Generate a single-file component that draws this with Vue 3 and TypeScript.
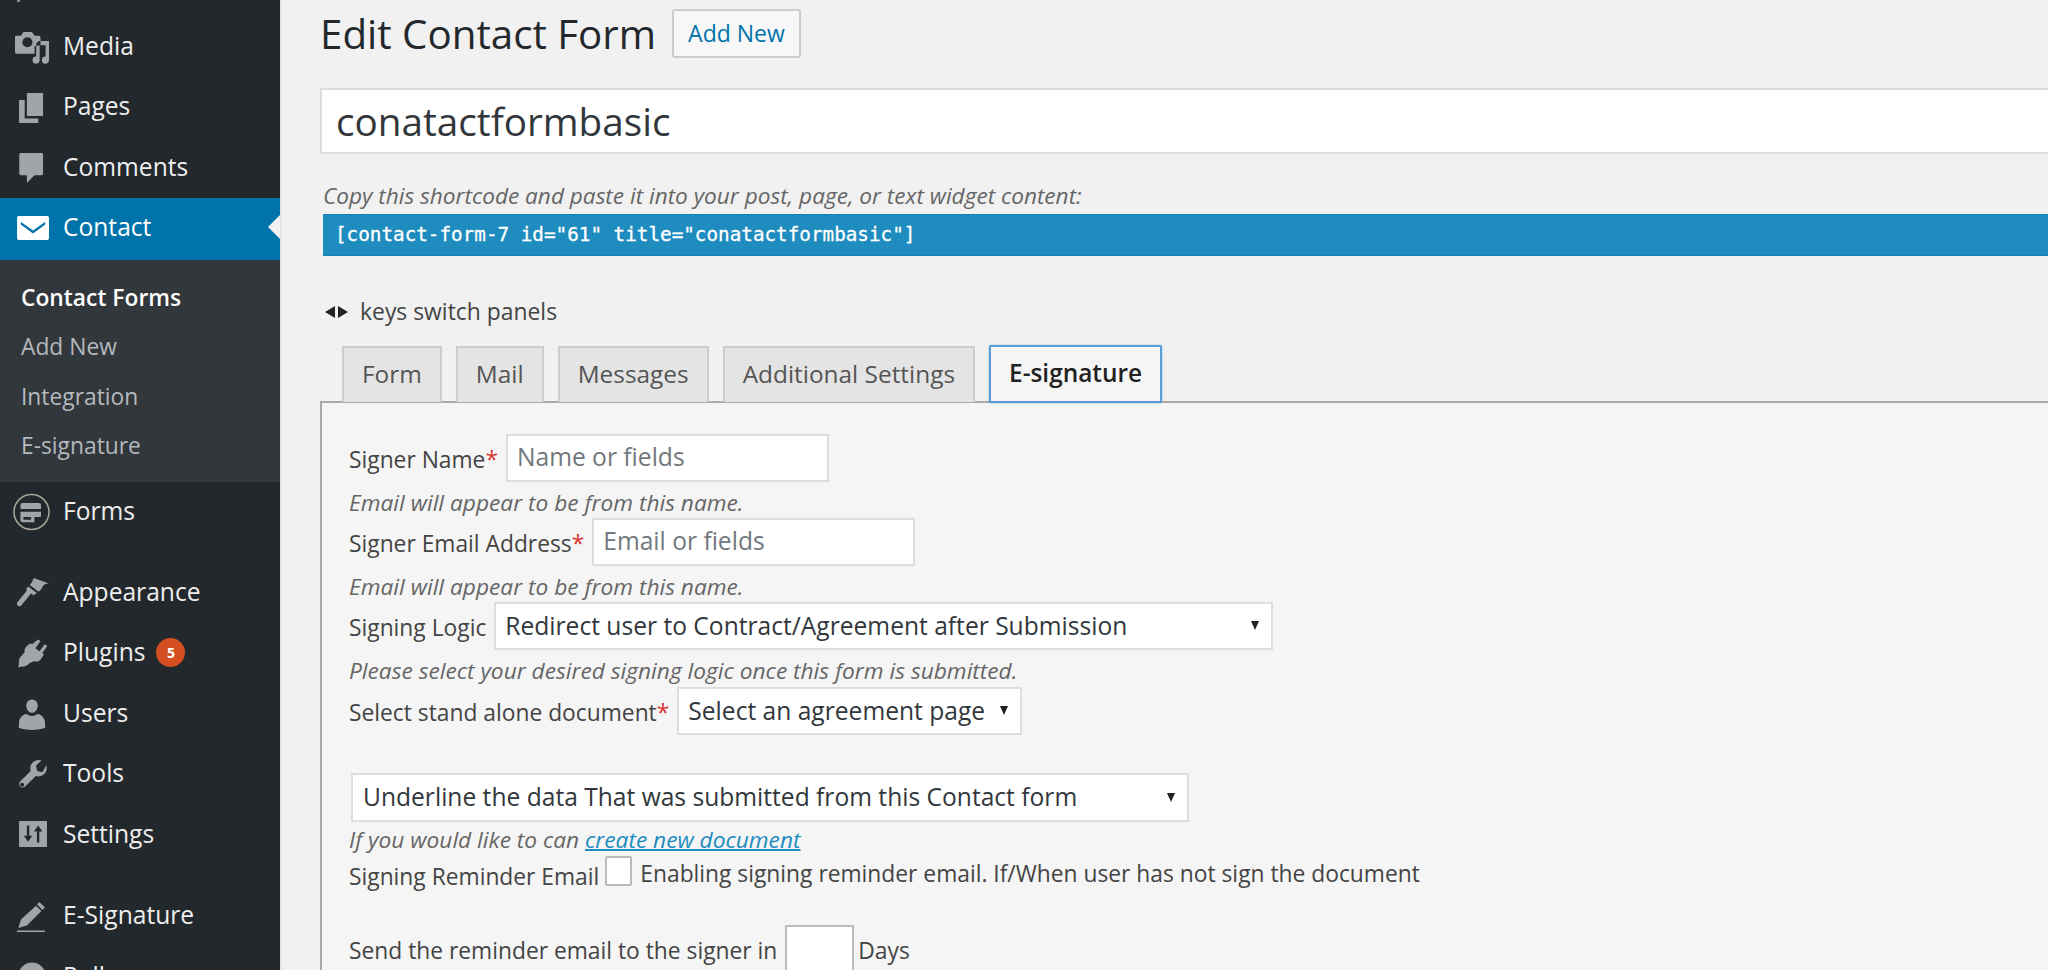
<template>
  <div class="page">
    <aside class="sidebar">
      <span class="cut-icon"></span>
      <ul class="menu">
        <li v-for="item in topItems" :key="item.label" class="menu-item">
          <svg class="menu-icon" viewBox="0 0 20 20"><path :d="item.icon" /></svg>
          <span>{{ item.label }}</span>
        </li>
      </ul>
      <div class="menu-item current">
        <svg class="menu-icon" viewBox="0 0 20 20"><path :d="icons.mail" /></svg>
        <span>Contact</span>
      </div>
      <ul class="submenu">
        <li class="sub-current">Contact Forms</li>
        <li>Add New</li>
        <li>Integration</li>
        <li>E-signature</li>
      </ul>
      <ul class="menu">
        <li class="menu-item forms-item">
          <svg class="menu-icon" viewBox="0 0 20 20">
            <circle cx="9.700" cy="10" r="10.300" fill="none" stroke="#a8a39a" stroke-width="0.9" />
            <path :d="icons.forms" />
          </svg>
          <span>Forms</span>
        </li>
      </ul>
      <ul class="menu">
        <li v-for="item in lowerItems" :key="item.label" class="menu-item">
          <svg class="menu-icon" viewBox="0 0 20 20"><path :d="item.icon" /></svg>
          <span>{{ item.label }}</span>
          <b v-if="item.badge" class="badge">{{ item.badge }}</b>
        </li>
      </ul>
      <ul class="menu menu-sign">
        <li class="menu-item">
          <svg class="menu-icon" viewBox="0 0 20 20"><path :d="icons.pen" /></svg>
          <span>E-Signature</span>
        </li>
        <li class="menu-item">
          <svg class="menu-icon" viewBox="0 0 20 20"><circle cx="10" cy="10" r="8" /></svg>
          <span>Polls</span>
        </li>
      </ul>
    </aside>

    <main class="content">
      <div class="heading">
        <h1>Edit Contact Form</h1>
        <a class="add-new">Add New</a>
      </div>
      <div class="title-input">conatactformbasic</div>
      <p class="caption">Copy this shortcode and paste it into your post, page, or text widget content:</p>
      <div class="shortcode">[contact-form-7 id="61" title="conatactformbasic"]</div>
      <p class="keys">
        <svg class="arrows" viewBox="0 0 23 12"><path d="M10 0v12L0 6zM13 0l10 6-10 6z" /></svg>
        keys switch panels
      </p>

      <div class="tabs">
        <span v-for="tab in tabs" :key="tab" class="tab">{{ tab }}</span>
        <span class="tab active">E-signature</span>
      </div>

      <section class="panel">
        <div class="group">
          <div class="row">
            <label>Signer Name<i>*</i></label>
            <div class="field f-name placeholder">Name or fields</div>
          </div>
          <p class="hint">Email will appear to be from this name.</p>
        </div>
        <div class="group">
          <div class="row">
            <label>Signer Email Address<i>*</i></label>
            <div class="field f-name placeholder">Email or fields</div>
          </div>
          <p class="hint">Email will appear to be from this name.</p>
        </div>
        <div class="group group-logic">
          <div class="row">
            <label>Signing Logic</label>
            <div class="field select f-logic">Redirect user to Contract/Agreement after Submission</div>
          </div>
          <p class="hint">Please select your desired signing logic once this form is submitted.</p>
        </div>
        <div class="row">
          <label>Select stand alone document<i>*</i></label>
          <div class="field select f-doc">Select an agreement page</div>
        </div>
        <div class="field select f-under">Underline the data That was submitted from this Contact form</div>
        <p class="hint hint-link">If you would like to can <a>create new document</a></p>
        <div class="row row-check">
          <label>Signing Reminder Email</label>
          <span class="check"></span>
          <span class="check-text">Enabling signing reminder email. If/When user has not sign the document</span>
        </div>
        <div class="row row-days">
          <label>Send the reminder email to the signer in</label>
          <span class="days"></span>
          <label>Days</label>
        </div>
      </section>
    </main>
  </div>
</template>

<script setup lang="ts">
const icons = {
  media:
    'M.5 4h3L5 1.800h5L11.500 4H14a1 1 0 0 1 1 1v4.500l-3.500.5v4.500H1a1 1 0 0 1-1-1V5a1 1 0 0 1 .5-1zM7.300 4.800a3 3 0 1 0 0 6 3 3 0 0 0 0-6zM20 7v11.300a2.100 2.100 0 1 1-2-2.100V9.500h-3.500v8.800a2.100 2.100 0 1 1-2-2.100V8.500l1.500-1.500z',
  pages: 'M7 1.800h9.500v13.500H7zM5.700 5.900v10.800h8v2.700H2.400V5.900z',
  comments:
    'M3.500 1.800h12c.6 0 1 .4 1 1v11c0 .6-.4 1-1 1h-4L7 19.400v-4.600H3.500c-.6 0-1-.4-1-1v-11c0-.6.4-1 1-1z',
  mail: 'M2.200 2.400H19a1 1 0 0 1 1 1v12.100a1 1 0 0 1-1 1H2.200a1 1 0 0 1-1-1V3.400a1 1 0 0 1 1-1zM3.400 5.700l7.200 5.200 7.200-5.200v1.600l-7.200 5.300-7.200-5.300z',
  forms:
    'M4.500 4.700H14c.8 0 1.300.5 1.300 1.300v2.200H3.200V6c0-.8.5-1.300 1.300-1.300zM3.200 9.900h12.100v2.400c0 .4-.3.7-.7.7h-3.200v3H4.500c-.8 0-1.300-.5-1.300-1.300zM5 13h4.500v1.500H5z',
  brush:
    'M11 1.800l9 3.200c-2.200 0-3.400.8-4 2.200-.5 1.200-1.300 2.200-2.300 2.500L8.700 5.900C9.700 4.900 10.500 3.500 11 1.800zM7.800 6.800l5 3.800-1.800 1.300-1.600-1-5.600 6.900c-.6.700-1.600.7-2.200.2s-.6-1.400-.1-2.100l5.400-6.600-.3-1.200z',
  plug:
    'M13.500 2l1.500 1-3 4.200 2.500 1.800 2.900-4.200 1.600 1.100-3 4.300 1 .7-1.700 2.600c-1 1.400-2.600 1.800-4.200 1.300L8.500 16c-1.300 1.600-3.300 2.200-4.500 2l-2 .5.300-2.500c-.2-1.500.3-3 1.400-4.200l1.900-2.100c-.2-1.500.3-2.800 1.400-3.800L9 4.200l1 .7z',
  users:
    'M10 2a3.400 3.400 0 0 1 3.400 3.600c0 2.200-1.500 4.300-3.400 4.300S6.600 7.800 6.600 5.600A3.400 3.400 0 0 1 10 2zM6.700 10.500c.9.800 2 1.300 3.300 1.300s2.400-.5 3.300-1.300c2.600.7 4 2.500 4.300 4.700l.2 3.500c-2 .8-5 1.300-7.800 1.300s-5.800-.5-7.800-1.300l.2-3.500c.3-2.200 1.700-4 4.300-4.700z',
  tools:
    'M18.400 4.800c.6 1.800.2 3.800-1.200 5.200-1.400 1.400-3.300 1.700-5 1.200l-6.200 6.200c-.8.800-2.200.8-3 0s-.8-2.200 0-3l6.200-6.200c-.5-1.700-.2-3.600 1.200-5 1.400-1.400 3.400-1.800 5.100-1.200l-3.200 3.200.8 3 3 .8zM4.200 15.100a1.200 1.200 0 1 0 0 2.400 1.200 1.200 0 0 0 0-2.400z',
  settings:
    'M2.400 2.400h16.400v15.200H2.400zM7 5h1.400v6h1.800l-2.500 3.500L5.200 11H7zM13.600 5l2.500 3.500h-1.800V15h-1.400V8.500h-1.800z',
  pen: 'M14.300 1.800l3.300 3.100-1.400 1.500-3.200-3.200zM12.300 3.900l3.200 3.200-8.500 8.500-5 1.500 1.500-5zM1.200 18.500h16.400v.9H1.200z',
}

const topItems = [
  { label: 'Media', icon: icons.media },
  { label: 'Pages', icon: icons.pages },
  { label: 'Comments', icon: icons.comments },
]

const lowerItems = [
  { label: 'Appearance', icon: icons.brush },
  { label: 'Plugins', icon: icons.plug, badge: '5' },
  { label: 'Users', icon: icons.users },
  { label: 'Tools', icon: icons.tools },
  { label: 'Settings', icon: icons.settings },
]

const tabs = ['Form', 'Mail', 'Messages', 'Additional Settings']
</script>

<style>
html, body {
  margin: 0;
  height: 970px;
  overflow: hidden;
  background: #f1f1f1;
}
</style>

<style scoped>
.page {
  display: flex;
  height: 970px;
  overflow: hidden;
  font-family: "Open Sans", "Noto Sans", sans-serif;
  color: #444;
}

.sidebar {
  position: relative;
  flex: none;
  width: 280px;
  height: 970px;
  padding-top: 16px;
  background: #23282d;
  border-right: 2px solid #e4e4e4;
  overflow: hidden;
}

.cut-icon {
  position: absolute;
  left: 17px;
  top: 0;
  width: 3px;
  height: 2px;
  background: #8a8f94;
}

ul {
  list-style: none;
  margin: 0;
  padding: 0;
}

.menu-item {
  position: relative;
  display: flex;
  align-items: center;
  height: 60.5px;
  padding-left: 15px;
  color: #eee;
  font-size: 24.6px;
}

.menu-item span {
  margin-top: -2px;
}

.menu-icon {
  flex: none;
  width: 34px;
  height: 34px;
  margin-right: 14px;
  fill: #a0a5aa;
  fill-rule: evenodd;
  overflow: visible;
}

.current {
  height: 62px;
  background: #0073aa;
  color: #fff;
}

.current span {
  margin-top: -4px;
}

.current .menu-icon {
  fill: #fff;
}

.current::after {
  content: "";
  position: absolute;
  right: 0;
  top: 17px;
  border: 12px solid transparent;
  border-right-color: #f1f1f1;
  border-left-width: 0;
}

.submenu {
  height: 222px;
  box-sizing: border-box;
  padding: 13px 0 0 21px;
  background: #32373c;
  color: #b4b9be;
  font-size: 22.8px;
}

.submenu li {
  line-height: 49.5px;
}

.sub-current {
  color: #fff;
  font-weight: 600;
}

.forms-item {
  margin-bottom: 20px;
}

.menu-sign {
  margin-top: 21px;
}

.badge {
  display: inline-flex;
  align-items: center;
  justify-content: center;
  width: 29px;
  height: 29px;
  margin-left: 11px;
  border-radius: 50%;
  background: #d54e21;
  color: #fff;
  font-size: 14px;
}

.content {
  flex: 1;
  min-width: 0;
  padding-left: 38px;
}

.heading {
  display: flex;
  align-items: center;
  height: 66px;
}

h1 {
  margin: 0;
  font-size: 40.3px;
  font-weight: 400;
  color: #23282d;
}

.add-new {
  margin-left: 16px;
  padding: 0 14px;
  line-height: 45px;
  border: 2px solid #ccc;
  border-radius: 3px;
  background: #f7f7f7;
  color: #0073aa;
  font-size: 23px;
}

.title-input {
  margin: 22px -4px 0 0;
  height: 62px;
  padding-left: 14px;
  line-height: 62px;
  border: 2px solid #ddd;
  background: #fff;
  color: #32373c;
  font-size: 38.7px;
  white-space: nowrap;
}

.caption {
  margin: 27px 0 0 3px;
  font-size: 22.6px;
  line-height: 30px;
  font-style: italic;
  color: #666;
  white-space: nowrap;
}

.shortcode {
  margin: 3px 0 0 3px;
  height: 42px;
  padding-left: 12px;
  line-height: 40px;
  background: #1e8cbe;
  border-top: 1px solid #1580b4;
  border-bottom: 1px solid #1580b4;
  box-sizing: border-box;
  color: #fff;
  font-family: "DejaVu Sans Mono", monospace;
  font-size: 19.3px;
  -webkit-text-stroke: .3px #fff;
}

.keys {
  display: flex;
  align-items: center;
  margin: 42px 0 0 5px;
  font-size: 22.9px;
  line-height: 28px;
  color: #444;
}

.arrows {
  width: 23px;
  height: 12px;
  margin-right: 12px;
  fill: #222;
}

.tabs {
  display: flex;
  gap: 14px;
  height: 56px;
  margin: 20px 0 0 22px;
  position: relative;
  z-index: 1;
}

.tab {
  padding: 0 18px;
  line-height: 52px;
  border: 2px solid #ccc;
  border-bottom: none;
  background: #e4e4e4;
  font-size: 24.4px;
  color: #555;
}

.active {
  height: 54px;
  margin-top: -1px;
  border: 2px solid #5b9dd9;
  border-radius: 2px;
  background: #f5f5f5;
  color: #222;
  font-weight: 600;
  box-shadow: 0 0 2px rgba(30, 140, 190, .6);
}

.panel {
  height: 600px;
  margin-top: -1px;
  padding: 31px 0 0 27px;
  border: 2px solid #aaa;
  border-right: none;
  background: #f5f5f5;
}

.group {
  height: 84px;
}

.group-logic {
  height: 85px;
}

.row {
  display: flex;
  align-items: flex-start;
}

.row label {
  margin: 2px 8px 0 0;
  line-height: 48px;
  color: #444;
  font-size: 22.8px;
  white-space: nowrap;
}

.row i {
  color: #dc3232;
  font-style: normal;
}

.field {
  box-sizing: border-box;
  height: 48px;
  line-height: 44px;
  border: 2px solid #ddd;
  background: #fff;
  color: #32373c;
  font-size: 24.6px;
  padding-left: 9px;
  position: relative;
  white-space: nowrap;
}

.placeholder {
  line-height: 42px;
  color: #72777c;
}

.f-name {
  width: 323px;
}

.f-logic {
  width: 779px;
}

.f-doc {
  width: 345px;
}

.f-under {
  width: 838px;
  height: 49px;
  margin: 36px 0 0 2px;
  padding-left: 10px;
}

.select::after {
  content: "";
  position: absolute;
  right: 12px;
  top: 50%;
  margin-top: -5px;
  border-top: 9px solid #222;
  border-left: 4px solid transparent;
  border-right: 4px solid transparent;
}

.hint {
  margin: 4px 0 0;
  line-height: 30px;
  font-size: 22.7px;
  font-style: italic;
  color: #666;
  white-space: nowrap;
}

.hint-link {
  margin-top: 3px;
}

.hint-link a {
  color: #1e8cbe;
  text-decoration: underline;
  text-decoration-thickness: 2px;
}

.row-check {
  height: 30px;
  margin-top: 1px;
}

.row-check label {
  margin: 5px 6px 0 0;
  line-height: 32px;
}

.check {
  flex: none;
  box-sizing: border-box;
  width: 27px;
  height: 30px;
  margin-right: 8px;
  border: 2px solid #bbb;
  border-radius: 2px;
  background: #fff;
}

.check-text {
  margin-top: 2px;
  line-height: 32px;
  font-size: 22.8px;
  white-space: nowrap;
}

.row-days {
  margin-top: 39px;
}

.row-days label {
  margin-top: 10px;
  line-height: 32px;
}

.days {
  flex: none;
  box-sizing: border-box;
  width: 69px;
  height: 60px;
  margin-right: 4px;
  border: 2px solid #bbb;
  background: #fff;
}
</style>
